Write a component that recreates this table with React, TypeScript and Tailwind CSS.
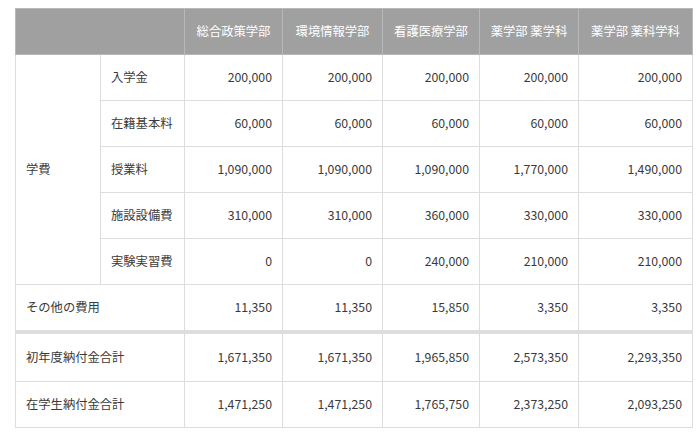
const cols = ["総合政策学部", "環境情報学部", "看護医療学部", "薬学部 薬学科", "薬学部 薬科学科"];

const fees: [string, string[]][] = [
  ["入学金", ["200,000", "200,000", "200,000", "200,000", "200,000"]],
  ["在籍基本料", ["60,000", "60,000", "60,000", "60,000", "60,000"]],
  ["授業料", ["1,090,000", "1,090,000", "1,090,000", "1,770,000", "1,490,000"]],
  ["施設設備費", ["310,000", "310,000", "360,000", "330,000", "330,000"]],
  ["実験実習費", ["0", "0", "240,000", "210,000", "210,000"]],
];

const other = ["11,350", "11,350", "15,850", "3,350", "3,350"];
const firstYear = ["1,671,350", "1,671,350", "1,965,850", "2,573,350", "2,293,350"];
const enrolled = ["1,471,250", "1,471,250", "1,765,750", "2,373,250", "2,093,250"];

const cell = "border border-[#dddddd] px-[10px] align-middle";

export default function App() {
  return (
    <div
      className="min-h-[437px] bg-white pl-[15px] pr-[8px] pt-[8px] text-[12.3px] text-[#3a3a3a]"
      style={{ fontFamily: '"Noto Sans CJK JP", "Noto Sans", sans-serif' }}
    >
      <table className="w-[677px] table-fixed border-collapse">
        <colgroup>
          <col className="w-[85px]" />
          <col className="w-[84px]" />
          <col className="w-[98px]" />
          <col className="w-[100px]" />
          <col className="w-[97px]" />
          <col className="w-[99px]" />
          <col className="w-[114px]" />
        </colgroup>
        <thead>
          <tr className="h-[46px] bg-[#a0a0a0] text-white">
            <th colSpan={2} className="border border-[#b8b8b8]" />
            {cols.map((c) => (
              <th key={c} className="border border-[#b8b8b8] text-center font-normal">
                {c}
              </th>
            ))}
          </tr>
        </thead>
        <tbody>
          {fees.map(([label, vals], i) => (
            <tr key={label} className="h-[46px]">
              {i === 0 && (
                <td rowSpan={5} className={cell}>
                  学費
                </td>
              )}
              <td className={cell}>{label}</td>
              {vals.map((v, j) => (
                <td key={j} className={`${cell} text-right`}>
                  {v}
                </td>
              ))}
            </tr>
          ))}
          <tr className="h-[47px]">
            <td colSpan={2} className={cell}>
              その他の費用
            </td>
            {other.map((v, j) => (
              <td key={j} className={`${cell} text-right`}>
                {v}
              </td>
            ))}
          </tr>
          <tr className="h-[50px]">
            <td colSpan={2} className={`${cell} border-t-4`}>
              初年度納付金合計
            </td>
            {firstYear.map((v, j) => (
              <td key={j} className={`${cell} border-t-4 text-right`}>
                {v}
              </td>
            ))}
          </tr>
          <tr className="h-[46px]">
            <td colSpan={2} className={cell}>
              在学生納付金合計
            </td>
            {enrolled.map((v, j) => (
              <td key={j} className={`${cell} text-right`}>
                {v}
              </td>
            ))}
          </tr>
        </tbody>
      </table>
    </div>
  );
}
